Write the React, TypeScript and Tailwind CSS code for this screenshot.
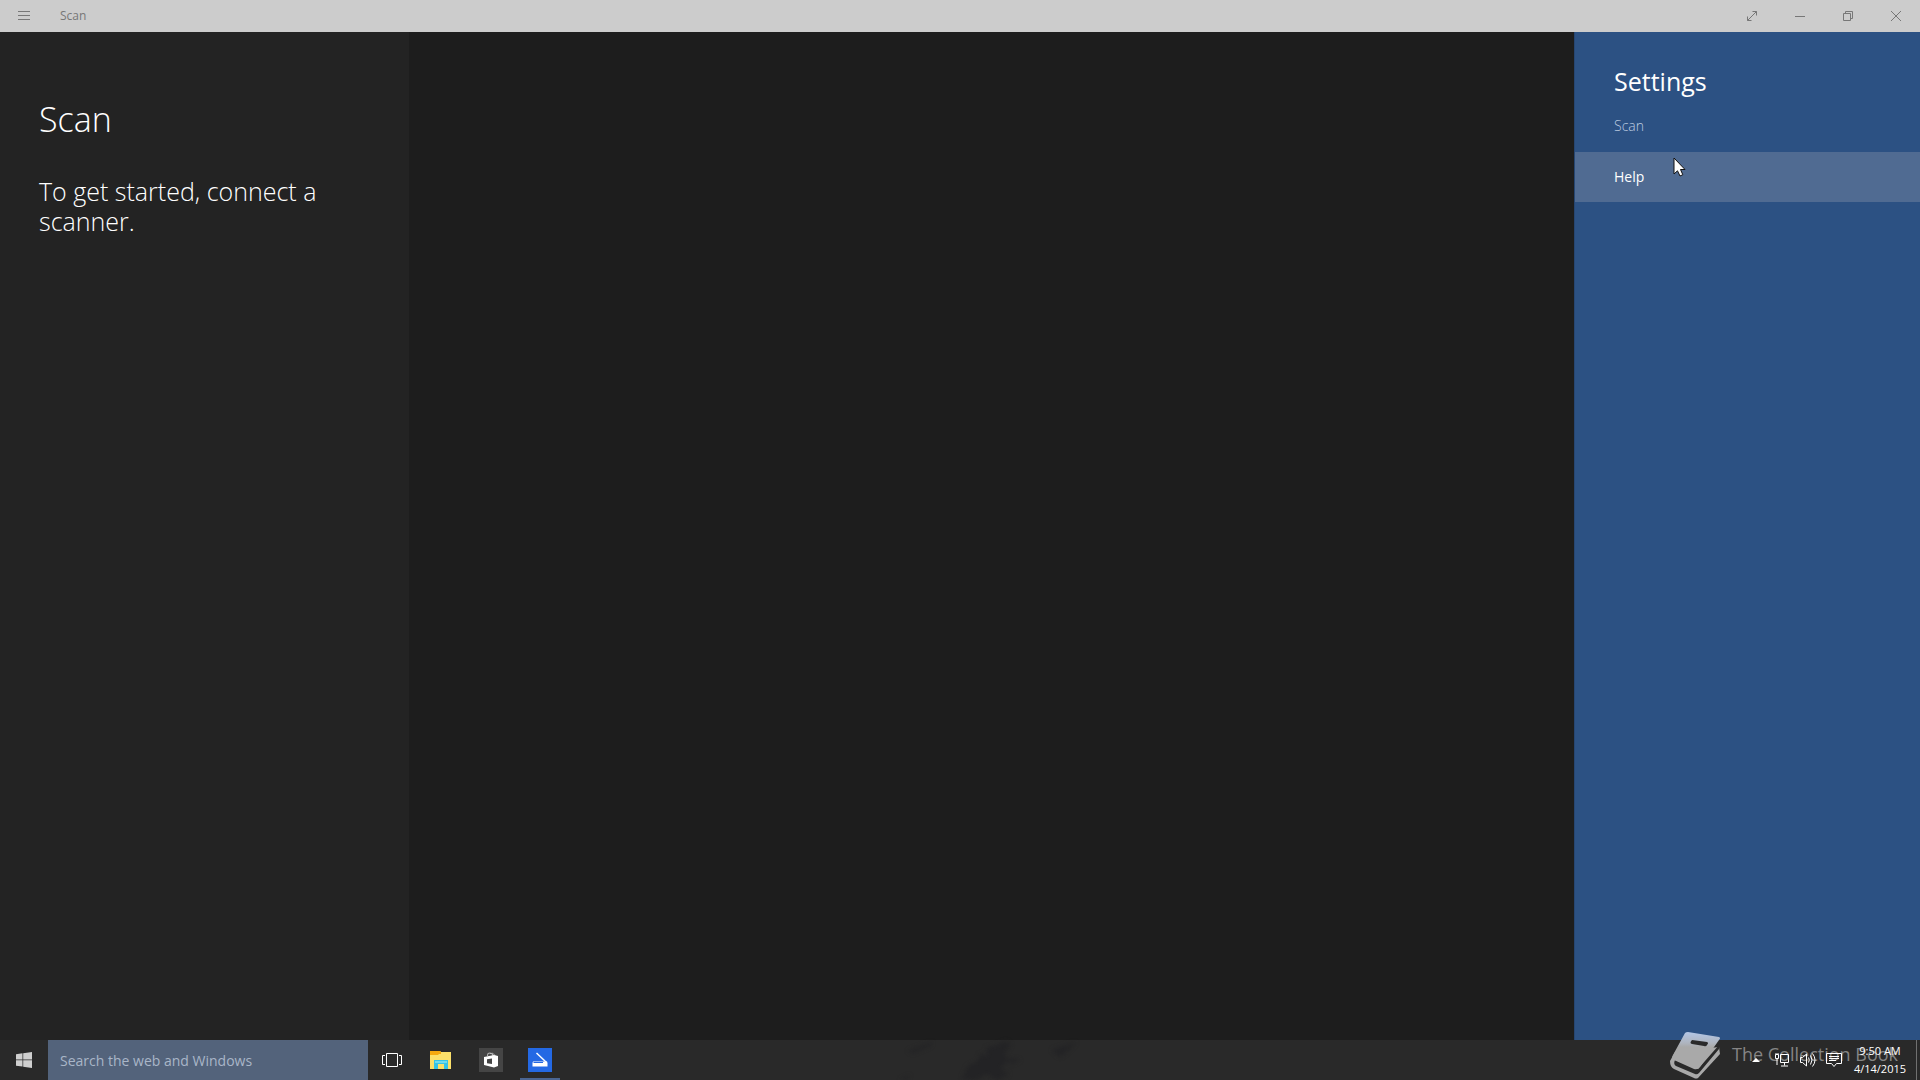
const captionButtons = [
    { label: 'Full screen', icon: <path d="M1.5 10.5 10.5 1.5M6.5 1.5h4v4M1.5 6.5v4h4" /> },
    { label: 'Minimize', icon: <path d="M1 6.5h10" /> },
    { label: 'Restore', icon: <path d="M1.5 3.5h7v7h-7zM3.5 3.5v-2h7v7h-2" /> },
    { label: 'Close', icon: <path d="M1 1l10 10M11 1 1 11" /> },
];

function TitleBar() {
    return (
        <header className="flex h-8 shrink-0 items-center bg-[#cccccc] text-[#777777]">
            <button aria-label="Menu" className="flex h-8 w-12 items-center justify-center">
                <svg width="12" height="10" viewBox="0 0 12 10" fill="none" stroke="currentColor">
                    <path d="M0 .5h12M0 4.5h12M0 8.5h12" />
                </svg>
            </button>
            <span className="ml-3 text-xs">Scan</span>
            <div className="ml-auto flex">
                {captionButtons.map((b) => (
                    <button key={b.label} aria-label={b.label} className="flex h-8 w-12 items-center justify-center">
                        <svg width="12" height="12" viewBox="0 0 12 12" fill="none" stroke="currentColor">{b.icon}</svg>
                    </button>
                ))}
            </div>
        </header>
    );
}

function SettingsPane() {
    return (
        <aside className="w-[346px] shrink-0 border-l border-[#264672] bg-[#2c5183] text-white">
            <h2 className="mt-8 px-[39px] text-[25px] leading-[34px]">Settings</h2>
            <p className="mt-[18px] px-[39px] text-sm leading-5 font-light text-[#bccbe0]">Scan</p>
            <button className="mt-4 block h-[50px] w-full bg-[#506b92] px-[39px] text-left text-sm">Help</button>
        </aside>
    );
}

function Tray() {
    return (
        <div className="relative ml-auto flex h-full items-center text-white">
            <button aria-label="Show hidden icons" className="flex h-10 w-6 items-center justify-center">
                <svg width="8" height="4" viewBox="0 0 8 4" fill="currentColor"><path d="M4 0 8 4H0z" /></svg>
            </button>
            <button aria-label="Network" className="flex h-10 w-7 items-center justify-center">
                <svg width="14" height="14" viewBox="0 0 14 14" fill="none" stroke="currentColor">
                    <path d="M5.5 1.5h8v8h-8zM9.5 9.5v3M6 13h7M.5 1.5h3v4h-3zM2 5.5v6.500M1 0v1.500M3 0v1.500" />
                </svg>
            </button>
            <button aria-label="Volume" className="flex h-10 w-6 items-center justify-center">
                <svg width="16" height="14" viewBox="0 0 16 14" fill="none" stroke="currentColor">
                    <path d="M.5 4.500h2L6.500 1v12L2.500 9.500h-2zM8.500 4.500q1.500 2.500 0 5M10.500 2.500q3 4.500 0 9M12.500 .5q5 6.500 0 13" />
                </svg>
            </button>
            <button aria-label="Notifications" className="flex h-10 w-7 items-center justify-center">
                <svg width="16" height="16" viewBox="0 0 16 16" fill="none" stroke="currentColor">
                    <path d="M.5 1.500h15v10H10.500l-2.500 3-2.500-3h-5zM3 4.500h10M3 6.500h10M3 8.500h7" />
                </svg>
            </button>
            <time className="ml-1 w-14 text-center text-[11px] leading-[18px]">
                9:50 AM
                <br />
                4/14/2015
            </time>
            <span className="ml-2 h-full w-1 border-l border-[#707070]" />
        </div>
    );
}

function Watermark() {
    return (
        <div className="pointer-events-none absolute right-[22px] bottom-0 flex h-12 items-center text-[#858585]">
            <svg width="50" height="48" viewBox="0 0 50 48">
                <defs>
                    <linearGradient id="cover" x1="0" y1="0" x2="0" y2="1">
                        <stop offset="0" stopColor="#b3c6e6" />
                        <stop offset=".3" stopColor="#aeb4be" />
                        <stop offset=".4" stopColor="#a9a9a9" />
                    </linearGradient>
                </defs>
                <path d="M5 20 49 15 50 22 28 46Q26 47 24 46L4 37Q0 35 0 29Z" fill="#a9a9a9" />
                <path d="M5 28Q3 32 6 34L25 42Q27 43 29 41L49 17V13L28 37Z" fill="#2a2a2a" />
                <path d="M15 1Q16 0 18 0L49 5Q51 6 49 8L30 35Q28 38 24 37L4 28Q1 26 3 23Z" fill="url(#cover)" />
                <path d="M22 8 37 10Q39 11 37 13 36 15 34 14L22 12Q19 11 22 8Z" fill="#2a2a2a" />
            </svg>
            <span className="ml-3 pb-1 text-lg leading-5 whitespace-nowrap">The Collection Book</span>
        </div>
    );
}

function Taskbar() {
    return (
        <footer className="relative flex h-10 shrink-0 items-center bg-[#292929]">
            {/* wallpaper showing faintly through the bar */}
            <svg className="absolute bottom-0 left-1/2 -ml-16 blur-[2px]" width="220" height="40" viewBox="0 0 220 40" fill="#222224">
                <path d="M12 11 36 2 34 6 17 13zM66 39 72 26 82 21 84 14 92 16 90 8 98 6 110 1 115 5 108 14 113 20 104 28 113 34 102 40 90 34 80 40zM4 40 14 35 10 40zM156 10 180 2 172 11 164 17zM112 18l12 2-8 4z" opacity=".8" />
            </svg>
            <button aria-label="Start" className="flex h-10 w-12 items-center justify-center">
                <svg width="16" height="16" viewBox="0 0 16 16" fill="#cfcfcf">
                    <path d="M0 2.200 6.500 1.300V7.500H0zM7.200 1.200 16 0V7.500H7.200zM0 8.300H6.500V14.600L0 13.700zM7.200 8.300H16V16L7.200 14.700z" />
                </svg>
            </button>
            <input
                type="text"
                aria-label="Search the web and Windows"
                placeholder="Search the web and Windows"
                className="h-10 w-80 bg-[#53637b] px-3 text-sm text-white outline-none placeholder:text-[#a9b6c8]"
            />
            <button aria-label="Task view" className="flex h-10 w-12 items-center justify-center">
                <svg width="20" height="14" viewBox="0 0 20 14" fill="none" stroke="#fff">
                    <path d="M4.500 .5h11v13h-11zM3 2.500H.5v9H3M17 2.500h2.500v9H17" />
                </svg>
            </button>
            <button aria-label="File Explorer" className="flex h-10 w-[50px] items-center justify-center">
                <svg width="22" height="20" viewBox="0 0 22 20">
                    <path d="M0 1h10l1 1h10v17H0z" fill="#fbe06a" />
                    <path d="M0 1h10l1 1v2H9L8 5H0z" fill="#f5a90f" />
                    <path d="M4 10h14v9h-4v-5H8v5H4z" fill="#35c3e6" />
                    <path d="M5 11h12v2H5z" fill="#6ddcf0" />
                    <path d="M9 15h4v4H9z" fill="#fbe06a" />
                </svg>
            </button>
            <button aria-label="Store" className="flex h-10 w-[50px] items-center justify-center">
                <svg width="24" height="24" viewBox="0 0 24 24">
                    <path d="M0 0h24v24H0z" fill="#454545" />
                    <path d="M8.500 8Q8 4.500 11 5T14 8M11 5.500Q14 4 16 7.500" fill="none" stroke="#bbb" />
                    <path d="M5 9 15 7 19 8V18L15 19.500 5 17z" fill="#fff" />
                    <path d="M8 11.200 13 10.500V16L8 15.200z" fill="#454545" />
                </svg>
            </button>
            <button aria-label="Scan" className="ml-1 flex h-10 w-10 items-center justify-center border-b-2 border-[#4a6592] pt-0.5">
                <svg width="24" height="24" viewBox="0 0 24 24">
                    <path d="M0 0h24v24H0z" fill="#2469e4" />
                    <path d="M8.500 5 18.500 14.500" stroke="#fff" strokeWidth="1.500" />
                    <path d="M5 13.500H19L19.500 15V18.500H4.500V15z" fill="#fff" />
                    <path d="M5.500 14.500H15" stroke="#2469e4" />
                </svg>
            </button>
            <Watermark />
            <Tray />
        </footer>
    );
}

export default function App() {
    return (
        <div className="relative flex h-screen flex-col overflow-hidden bg-[#1d1d1d] font-['Open_Sans','Noto_Sans',sans-serif]">
            <TitleBar />
            <div className="flex flex-1">
                <section className="w-[409px] shrink-0 bg-[#232323] px-[39px] font-light text-white">
                    <h1 className="mt-16 text-[34px] leading-[46px]">Scan</h1>
                    <p className="mt-[34px] max-w-[300px] text-[25px] leading-[30px]">To get started, connect a scanner.</p>
                </section>
                <main className="flex-1" />
                <SettingsPane />
            </div>
            <Taskbar />
            <svg className="pointer-events-none absolute top-[157px] right-[234px]" width="13" height="20" viewBox="0 0 13 20">
                <path d="M1 1v16l3.500-3.200L7 19l2.800-1.300L7.500 12.500H12z" fill="#fff" stroke="#111" />
            </svg>
        </div>
    );
}
